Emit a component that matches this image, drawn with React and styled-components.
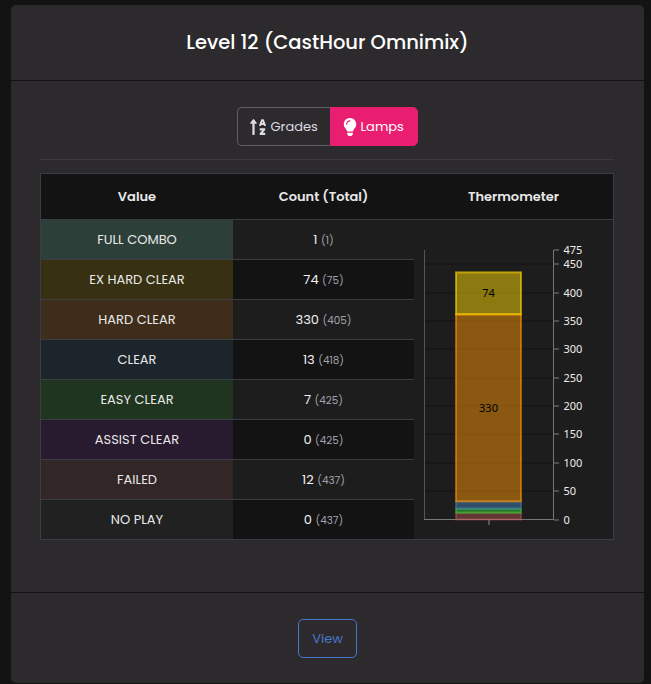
import React from "react";
import styled, { createGlobalStyle } from "styled-components";
import { FaSortAlphaUp, FaLightbulb } from "react-icons/fa";

const GlobalStyle = createGlobalStyle`
  * { box-sizing: border-box; }
  body {
    margin: 0;
    background: #131313;
    font-family: Poppins, Inter, sans-serif;
    font-size: 13px;
    line-height: 1.5;
    color: #e8e8e8;
    overflow: hidden;
  }
`;

const Page = styled.main`
  height: 684px;
  padding: 5px 7px 1px 11px;
`;

const Card = styled.section`
  display: flex;
  flex-direction: column;
  height: 678px;
  background: #2c2a2d;
  border-radius: 5px;
`;

const CardHeader = styled.header`
  display: flex;
  align-items: center;
  justify-content: center;
  height: 76px;
  border-bottom: 1px solid #131313;
`;

const Title = styled.h1`
  margin: 0;
  color: #fff;
  font-size: 19.5px;
  font-weight: 500;
`;

const CardBody = styled.div`
  flex: 1;
  display: flex;
  flex-direction: column;
  align-items: center;
  padding: 26px 30px 0 29px;
`;

const CardFooter = styled.footer`
  display: flex;
  justify-content: center;
  height: 91px;
  padding-top: 26px;
  border-top: 1px solid #131313;
`;

const ButtonGroup = styled.div`
  display: flex;
  height: 39px;
`;

const ToggleButton = styled.button`
  display: flex;
  align-items: center;
  gap: ${(p) => (p.$active ? 4 : 5)}px;
  width: ${(p) => (p.$active ? 88 : 93)}px;
  padding: 0 0 0 12px;
  border: 1px solid ${(p) => (p.$active ? "#e91e70" : "#5f5e61")};
  border-right-width: ${(p) => (p.$active ? 1 : 0)}px;
  border-radius: ${(p) => (p.$active ? "0 5px 5px 0" : "5px 0 0 5px")};
  background: ${(p) => (p.$active ? "#e91e70" : "transparent")};
  color: ${(p) => (p.$active ? "#fff" : "#dcdce2")};
  font: inherit;

  svg {
    flex: none;
    width: ${(p) => (p.$active ? 14 : 16)}px;
    height: 18px;
  }
`;

const Divider = styled.hr`
  width: 100%;
  height: 1px;
  margin: 13px 0;
  border: 0;
  background: #3b393c;
`;

const Table = styled.table`
  width: 574px;
  table-layout: fixed;
  border: 1px solid #3a3d41;
  border-collapse: separate;
  border-spacing: 0;
  background: #1d1d1d;
  text-align: center;
`;

const HeadCell = styled.th`
  width: ${(p) => p.$width}px;
  height: 46px;
  padding: 0;
  border-bottom: 1px solid #3a3d41;
  background: #131313;
  font-weight: 600;
`;

const Row = styled.tr`
  td {
    height: 40px;
    padding: 0;
    border-bottom: 1px solid #3a3d41;
  }

  &:nth-child(even) {
    background: #131313;
  }

  &:last-child td {
    height: 39px;
    border-bottom: 0;
  }
`;

const LampCell = styled.td`
  background: ${(p) => p.$tint};
`;

const CountCell = styled.td`
  color: #f0f0f0;

  small {
    color: #a2a2ac;
    font-size: 10.4px;
  }
`;

const ChartCell = styled.td`
  && {
    height: 319px;
    border-bottom: 0;
    background: #1d1d1d;
  }
`;

const Chart = styled.svg`
  display: block;
  width: 199px;
  height: 319px;
  font-family: "Noto Sans", sans-serif;
  font-size: 11px;
`;

const ViewButton = styled.button`
  width: 59px;
  height: 39px;
  padding: 0;
  border: 1px solid #4a76c9;
  border-radius: 5px;
  background: transparent;
  color: #4a76c9;
  font: inherit;
`;

const LAMPS = [
  { name: "FULL COMBO", count: 1, total: 1, tint: "#2d3f39" },
  { name: "EX HARD CLEAR", count: 74, total: 75, tint: "#373012" },
  { name: "HARD CLEAR", count: 330, total: 405, tint: "#3e2d1b" },
  { name: "CLEAR", count: 13, total: 418, tint: "#1c252c" },
  { name: "EASY CLEAR", count: 7, total: 425, tint: "#1f3520" },
  { name: "ASSIST CLEAR", count: 0, total: 425, tint: "#281a2f" },
  { name: "FAILED", count: 12, total: 437, tint: "#322626" },
  { name: "NO PLAY", count: 0, total: 437, tint: "#212121" },
];

const SEGMENTS = [
  { from: 0, to: 12, color: "#cc5c5c", opacity: 0.4 },
  { from: 12, to: 19, color: "#32cd32", opacity: 0.5 },
  { from: 19, to: 32, color: "#4682b4", opacity: 0.5 },
  { from: 32, to: 362, color: "#f89406", opacity: 0.5, edge: "#ff8c00", label: "330" },
  { from: 362, to: 436, color: "#fbd705", opacity: 0.5, edge: "#ffd700", label: "74" },
];

const TICKS = [0, 50, 100, 150, 200, 250, 300, 350, 400, 450, 475];
const yOf = (value) => 299.5 - value * 0.5668;

function Thermometer() {
  return (
    <Chart viewBox="0 0 199 319">
      {TICKS.slice(1, -1).map((t) => (
        <rect key={t} x="11" y={Math.round(yOf(t)) - 1} width="128" height="2" fill="#171717" />
      ))}
      <rect x="10" y="30" width="1" height="270" fill="#555" />
      <rect x="139" y="30" width="1" height="270" fill="#777" />
      <rect x="10" y="299" width="130" height="1" fill="#777" />
      <rect x="74" y="300" width="2" height="5" fill="#555" />
      {TICKS.map((t) => (
        <g key={t}>
          <rect x="140" y={Math.round(yOf(t)) - 1} width="5" height="2" fill="#4d4d4d" />
          <text x="149.5" y={Math.round(yOf(t)) + 4} fill="#ededed">{t}</text>
        </g>
      ))}
      {SEGMENTS.map((s) => (
        <g key={s.from}>
          <rect
            x="42"
            y={yOf(s.to)}
            width="65"
            height={yOf(s.from) - yOf(s.to)}
            fill={s.color}
            fillOpacity={s.opacity}
            stroke={s.edge || s.color}
            strokeOpacity={s.edge ? 0.6 : s.opacity}
            strokeWidth="2"
          />
          {s.label && (
            <text
              x="74.5"
              y={Math.round((yOf(s.from) + yOf(s.to)) / 2) + 4}
              textAnchor="middle"
              fill="#000"
            >
              {s.label}
            </text>
          )}
        </g>
      ))}
    </Chart>
  );
}

export default function App() {
  return (
    <>
      <GlobalStyle />
      <Page>
        <Card>
          <CardHeader>
            <Title>Level 12 (CastHour Omnimix)</Title>
          </CardHeader>
          <CardBody>
            <ButtonGroup>
              <ToggleButton>
                <FaSortAlphaUp />
                Grades
              </ToggleButton>
              <ToggleButton $active>
                <FaLightbulb />
                Lamps
              </ToggleButton>
            </ButtonGroup>
            <Divider />
            <Table>
              <thead>
                <tr>
                  <HeadCell $width={192}>Value</HeadCell>
                  <HeadCell $width={181}>Count (Total)</HeadCell>
                  <HeadCell $width={199}>Thermometer</HeadCell>
                </tr>
              </thead>
              <tbody>
                {LAMPS.map((lamp, i) => (
                  <Row key={lamp.name}>
                    <LampCell $tint={lamp.tint}>{lamp.name}</LampCell>
                    <CountCell>
                      {lamp.count} <small>({lamp.total})</small>
                    </CountCell>
                    {i === 0 && (
                      <ChartCell rowSpan={LAMPS.length}>
                        <Thermometer />
                      </ChartCell>
                    )}
                  </Row>
                ))}
              </tbody>
            </Table>
          </CardBody>
          <CardFooter>
            <ViewButton>View</ViewButton>
          </CardFooter>
        </Card>
      </Page>
    </>
  );
}
